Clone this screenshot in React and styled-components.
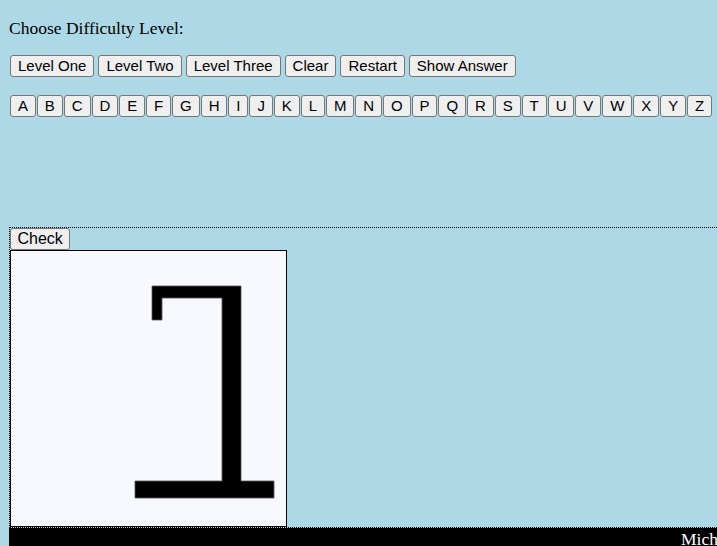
import React from "react";
import styled, { createGlobalStyle } from "styled-components";

const GlobalStyle = createGlobalStyle`
	html, body {
		margin: 0;
		padding: 0;
		overflow: hidden;
		background-color: lightblue;
	}
	body {
		font-family: "Liberation Serif", "Times New Roman", serif;
		font-size: 16px;
		color: #000;
	}
`;

const Page = styled.div`
	display: flex;
	flex-direction: column;
	width: 760px;
	padding-left: 9px;
`;

const Title = styled.p`
	margin: 17.5px 0;
	font-size: 17.5px;
	line-height: 20px;
`;

const ButtonRow = styled.div`
	display: flex;
	gap: 4px;
	padding-left: 1px;
	margin-bottom: 18px;
`;

const LetterRow = styled.div`
	display: flex;
	gap: 1px;
	padding-left: 1px;
`;

const Button = styled.button`
	font-family: "Liberation Sans", Arial, sans-serif;
	font-size: ${(p) => p.size || 15}px;
	line-height: 18px;
	padding: 1px ${(p) => p.pad || 7}px;
	margin: 0;
	background: #efefef;
	color: #000;
	border: 1px solid #767676;
	border-radius: 3px;
	white-space: nowrap;
	cursor: pointer;
`;

const AnswerArea = styled.div`
	height: 110px;
`;

const Board = styled.section`
	display: flex;
	flex-direction: column;
	align-items: flex-start;
	border: 1px dotted #000;
`;

const Canvas = styled.div`
	width: 275px;
	height: 275px;
	border: 1px solid #000;
	background: ghostwhite;
`;

const Footer = styled.footer`
	background: #000;
	color: #fff;
	font-size: 17.5px;
	line-height: 20px;
	padding: 1px 0 6px 672px;
	white-space: nowrap;
`;

const levels = ["Level One", "Level Two", "Level Three", "Clear", "Restart", "Show Answer"];
const letters = "ABCDEFGHIJKLMNOPQRSTUVWXYZ".split("");

function Glyph() {
	return (
		<svg width="275" height="275" viewBox="0 0 275 275">
			<path
				d="M141 35 H230 V230 H263 V247 H124 V230 H211 V47 H151 V69 H141 Z"
				fill="#000"
				stroke="#555"
				strokeWidth="0.8"
			/>
		</svg>
	);
}

export default function App() {
	return (
		<>
			<GlobalStyle />
			<Page>
				<Title>Choose Difficulty Level:</Title>
				<ButtonRow>
					{levels.map((l) => (
						<Button key={l}>{l}</Button>
					))}
				</ButtonRow>
				<LetterRow>
					{letters.map((l) => (
						<Button key={l} pad={6.95}>
							{l}
						</Button>
					))}
				</LetterRow>
				<AnswerArea />
				<Board>
					<Button size={16} pad={6.5}>Check</Button>
					<Canvas>
						<Glyph />
					</Canvas>
				</Board>
				<Footer>Michael</Footer>
			</Page>
		</>
	);
}
